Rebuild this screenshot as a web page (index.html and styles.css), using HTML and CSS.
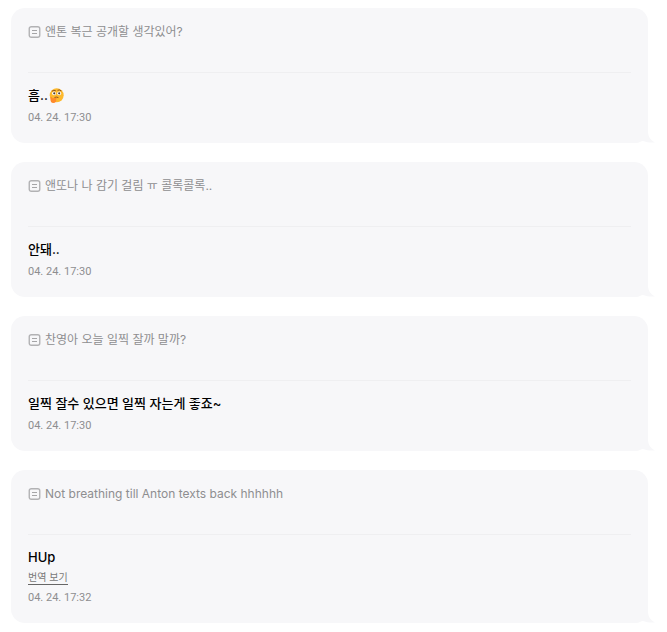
FILE: index.html
```html
<!DOCTYPE html>
<html lang="ko">
<head>
    <meta charset="UTF-8">
    <meta name="viewport" content="width=device-width, initial-scale=1.0">
    <title>Messages</title>
    <link rel="stylesheet" href="styles.css">
</head>
<body>
    <!-- shared shapes -->
    <svg class="defs" aria-hidden="true">
        <symbol id="note" viewBox="0 0 13 12">
            <rect x="1.25" y="0.75" width="10.5" height="10.5" rx="2" fill="none" stroke="#b2b2b4" stroke-width="1.4"/>
            <path d="M4 4.500h5M4 7.500h5" stroke="#a5a5a7" stroke-width="1"/>
        </symbol>
        <symbol id="tail" viewBox="0 0 18 12">
            <path d="M0 12V0H11C11 5 13 9 18 11.500H12C10 11.500 9 10.500 6 10C4 10 3 11.500 0 12Z" fill="#f7f7f9"/>
        </symbol>
    </svg>

    <main class="messages">
        <article class="card">
            <div class="question">
                <svg class="note-icon" aria-hidden="true"><use href="#note"/></svg>
                <span>앤톤 복근 공개할 생각있어?</span>
            </div>
            <div class="answer">
                <p class="text">흠..<svg class="emoji" viewBox="0 0 14 14" role="img" aria-label="🤔">
                    <circle cx="7.200" cy="6.800" r="6.500" fill="#fdb92e"/>
                    <circle cx="4.700" cy="5" r="1.800" fill="#fff"/>
                    <circle cx="9.500" cy="5" r="1.800" fill="#fff"/>
                    <circle cx="4.900" cy="5" r="1" fill="#4a3a35"/>
                    <circle cx="9.500" cy="5" r="1" fill="#4a3a35"/>
                    <path d="M3 2.800q1.500-1 3-.4M8.300 2q1.500-.8 3 .5M5.500 8.700q1.500-.6 3 .1" fill="none" stroke="#7c431d" stroke-width="0.8" stroke-linecap="round"/>
                    <path d="M1.300 9Q1 7.800 2.200 8.200L3.400 9.600L6.600 9Q7.800 9.300 6.700 10.200Q7.300 13.800 4 14Q1 13.800 1.300 9Z" fill="#ff8a2b"/>
                </svg></p>
                <time class="date">04. 24. 17:30</time>
            </div>
            <svg class="tail" aria-hidden="true"><use href="#tail"/></svg>
        </article>

        <article class="card">
            <div class="question">
                <svg class="note-icon" aria-hidden="true"><use href="#note"/></svg>
                <span>앤또나 나 감기 걸림 ㅠ 콜록콜록..</span>
            </div>
            <div class="answer">
                <p class="text">안돼..</p>
                <time class="date">04. 24. 17:30</time>
            </div>
            <svg class="tail" aria-hidden="true"><use href="#tail"/></svg>
        </article>

        <article class="card">
            <div class="question">
                <svg class="note-icon" aria-hidden="true"><use href="#note"/></svg>
                <span>찬영아 오늘 일찍 잘까 말까?</span>
            </div>
            <div class="answer">
                <p class="text">일찍 잘수 있으면 일찍 자는게 좋죠~</p>
                <time class="date">04. 24. 17:30</time>
            </div>
            <svg class="tail" aria-hidden="true"><use href="#tail"/></svg>
        </article>

        <article class="card">
            <div class="question">
                <svg class="note-icon" aria-hidden="true"><use href="#note"/></svg>
                <span>Not breathing till Anton texts back hhhhhh</span>
            </div>
            <div class="answer">
                <p class="text">HUp</p>
                <a class="translate" href="#">번역 보기</a>
                <time class="date">04. 24. 17:32</time>
            </div>
            <svg class="tail" aria-hidden="true"><use href="#tail"/></svg>
        </article>
    </main>
</body>
</html>
```
FILE: styles.css
```css
* {
    box-sizing: border-box;
}
body {
    margin: 0;
    background: #fff;
    font-family: Inter, "Noto Sans CJK KR", sans-serif;
    color: #000;
}
.defs {
    display: none;
}
.messages {
    display: flex;
    flex-direction: column;
    gap: 19px;
    padding: 8px 19px 8px 11px;
}
.card {
    position: relative;
    padding: 15px 17px 17px;
    border-radius: 14px 14px 0 14px;
    background: #f7f7f9;
}
.question {
    display: flex;
    align-items: center;
    gap: 4px;
    padding-bottom: 31px;
    border-bottom: 1px solid #efeff1;
    font-size: 12px;
    line-height: 18px;
    color: #8e8e90;
}
.note-icon {
    flex: none;
    width: 13px;
    height: 12px;
}
.answer {
    display: flex;
    flex-direction: column;
    align-items: flex-start;
    padding-top: 12px;
}
.text {
    margin: 0;
    font-size: 13px;
    font-weight: 500;
    line-height: 20px;
}
.emoji {
    width: 15px;
    height: 15px;
    margin-left: 1px;
    vertical-align: -3px;
}
.translate {
    margin-top: 3px;
    border-bottom: 1px solid #666;
    font-size: 10px;
    line-height: 14px;
    color: #777;
    text-decoration: none;
}
.date {
    margin-top: 5px;
    font-family: Roboto, sans-serif;
    font-size: 11px;
    line-height: 16px;
    color: #8e8e90;
}
/* speech bubble tail over the bottom right corner */
.tail {
    position: absolute;
    right: -7px;
    bottom: 0;
    width: 18px;
    height: 12px;
    background: #fff;
}
```
